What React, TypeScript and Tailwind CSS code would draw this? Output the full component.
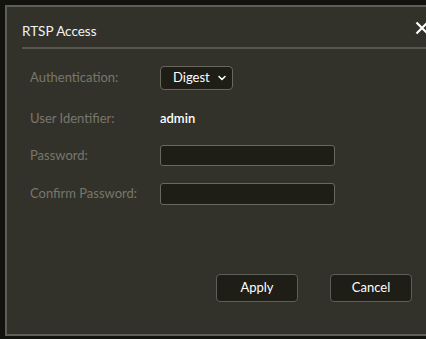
import { ChevronDown } from "lucide-react";

const font = { fontFamily: '"Lato", "Noto Sans", sans-serif' };

function Row({ label, children, className }: { label: string; children: React.ReactNode; className: string }) {
  return (
    <div className={`flex items-center ${className}`}>
      <div className="w-[153px] shrink-0 whitespace-nowrap pl-[23px] text-[13px] text-[#77776d]">{label}</div>
      {children}
    </div>
  );
}

export default function App() {
  return (
    <main className="h-[339px] w-[426px] overflow-hidden bg-[#12120e] pl-[5px] pt-[5px]" style={font}>
      <div className="flex h-[331px] w-[430px] flex-col border-t-2 border-b-2 border-l-2 border-[#5e5e58] bg-[#33322a]">
        <header className="ml-[15px] flex h-[42px] items-start border-b-2 border-[#55554e] pt-[16px]">
          <h2 className="text-[13.5px] leading-[16px] text-[#f2f2f2]">RTSP Access</h2>
          <svg className="ml-auto mr-[6px] -mt-[2px]" width="14" height="14" viewBox="0 0 14 14">
            <path d="M1.5 1.5 L12.5 12.5 M12.5 1.5 L1.5 12.5" stroke="#ffffff" strokeWidth="2.2" />
          </svg>
        </header>

        <section className="mt-[17px] flex flex-col">
          <Row label="Authentication:" className="h-[24px]">
            <div className="flex h-[24px] w-[73px] items-center rounded-[4px] border border-[#68685f] bg-[#1e1e17] pl-[12px] pr-[4px] text-[13px] text-white">
              Digest
              <ChevronDown className="ml-auto" size={12} strokeWidth={3} color="#ffffff" />
            </div>
          </Row>
          <Row label="User Identifier:" className="mt-[17px] h-[24px]">
            <span className="text-[13px] font-semibold text-white">admin</span>
          </Row>
          <Row label="Password:" className="mt-[14px] h-[21px]">
            <div className="h-[21px] w-[175px] rounded-[3px] border border-[#68685f] bg-[#1e1e17]" />
          </Row>
          <Row label="Confirm Password:" className="mt-[17px] h-[22px]">
            <div className="h-[22px] w-[175px] rounded-[3px] border border-[#68685f] bg-[#1e1e17]" />
          </Row>
        </section>

        <footer className="mt-[69px] flex gap-[32px] pl-[209px]">
          <button className="h-[28px] w-[82px] rounded-[4px] border border-[#5e5e58] bg-[#1e1e17] text-[13px] text-white">
            Apply
          </button>
          <button className="h-[28px] w-[82px] rounded-[4px] border border-[#5e5e58] bg-[#1e1e17] text-[13px] text-white">
            Cancel
          </button>
        </footer>
      </div>
    </main>
  );
}
